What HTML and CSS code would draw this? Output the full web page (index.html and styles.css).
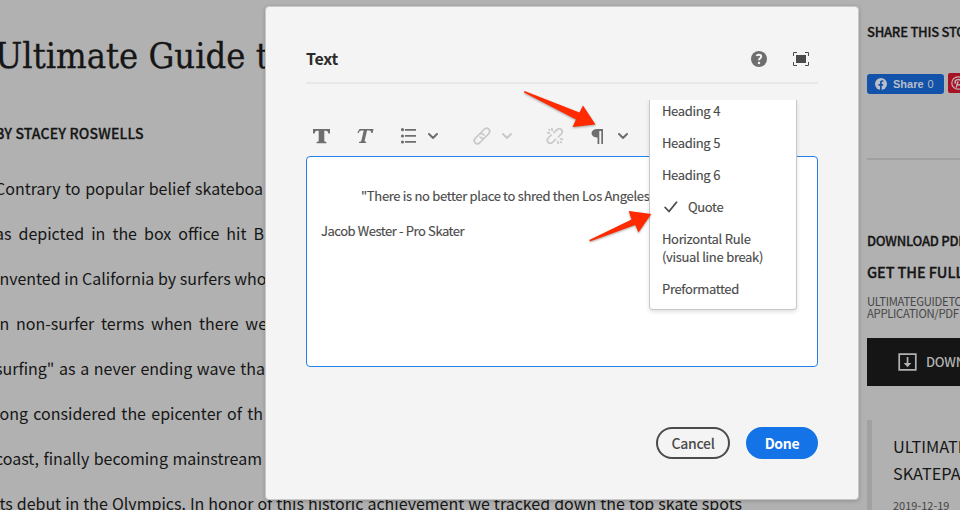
FILE: index.html
```html
<!DOCTYPE html>
<html lang="en">
<head>
<meta charset="utf-8">
<title>Ultimate Guide</title>
<link rel="stylesheet" href="styles.css">
</head>
<body>
<div class="page">
  <main class="article">
    <h1 class="headline">Ultimate Guide to</h1>
    <p class="byline">BY STACEY ROSWELLS</p>
    <div class="story">
      <p class="line l1">Contrary to popular belief skateboa</p>
      <p class="line l2">as depicted in the box office hit B</p>
      <p class="line l3">invented in California by surfers who</p>
      <p class="line l4">in non-surfer terms when there we</p>
      <p class="line l5">surfing" as a never ending wave tha</p>
      <p class="line l6">long considered the epicenter of th</p>
      <p class="line l7">coast, finally becoming mainstream</p>
      <p class="line l8">its debut in the Olympics. In honor of this historic achievement we tracked down the top skate spots</p>
    </div>
  </main>
  <aside class="sidebar">
    <h2 class="side-title">SHARE THIS STORY</h2>
    <div class="social">
      <span class="fb">
        <svg width="12" height="12" viewBox="0 0 12 12"><circle cx="6" cy="6" r="6" fill="#b9bec8"/><path d="M5 12V7.7H3.5V6H5V4.7C5 3.1 5.9 2.3 7.2 2.3l1.2.1v1.4h-.8c-.7 0-.9.5-.9 1V6h1.6L8 7.7H6.7V12z" fill="#1252a8"/></svg>
        <b>Share</b><span>0</span>
      </span>
      <span class="pin">
        <svg width="14" height="14" viewBox="0 0 14 14" fill="none" stroke="#c0b2b4"><circle cx="7" cy="7" r="6.2" stroke-width="1.2"/><path d="M5.2 11.6 7 5.4M4.6 7.7C3.2 5.5 4.8 3.5 7.2 3.5s3.6 2 2.8 3.9c-.7 1.9-3 2-3.5.7" stroke-width="1.5"/></svg>
      </span>
    </div>
    <hr class="rule">
    <h2 class="side-title pdf">DOWNLOAD PDF</h2>
    <h3 class="side-head">GET THE FULL</h3>
    <p class="meta">ULTIMATEGUIDETO<br>APPLICATION/PDF</p>
    <div class="download">
      <svg width="20" height="19" viewBox="0 0 20 19"><path d="M1.2 1.2h16.6v15.6H1.2z" fill="none" stroke="#b0b2b1" stroke-width="1.7"/><path d="M8.7 4h1.7v6h3L9.5 14.2 5.7 10h3z" fill="#b0b2b1"/></svg>
      <span>DOWNLOAD</span>
    </div>
    <div class="related">
      <p class="related-title">ULTIMATE<br>SKATEPARK</p>
      <p class="date">2019-12-19</p>
    </div>
  </aside>
</div>

<section class="dialog">
  <header class="dialog-head">
    <h2>Text</h2>
    <svg class="help" width="16" height="16" viewBox="0 0 16 16"><circle cx="8" cy="8" r="8" fill="#6e6e6e"/><path d="M5.6 5C6 3.4 10.2 3.1 10.2 5.6 10.2 7.3 8 7.3 8 9.3" fill="none" stroke="#f4f4f4" stroke-width="2"/><circle cx="8" cy="12" r="1.25" fill="#f4f4f4"/></svg>
    <svg class="full" width="16" height="14" viewBox="0 0 16 14"><path d="M3 3h10v8H3z" fill="#4b4b4b"/><path d="M.5 4V.5H4M12 .5h3.5V4M15.500 10v3.500H12M4 13.500H.5V10" fill="none" stroke="#4b4b4b"/></svg>
  </header>
  <div class="toolbar">
    <svg width="512" height="24" viewBox="306 124 512 24">
      <g fill="#6e6e6e">
        <path d="M313 129h17v4.500h-1.700c-.1-1.900-.8-2.700-2.500-2.700h-1.500v9.600c0 1 .4 1.300 2.100 1.500v1.300h-9.800v-1.300c1.700-.2 2.100-.5 2.100-1.500v-9.600h-1.500c-1.700 0-2.400.8-2.500 2.700H313z"/>
        <path d="M359.500 129h14l-.9 4h-1.300c0-1.900-.6-2.600-2.300-2.600h-2l-2.300 10c-.2.900.1 1.200 1.600 1.400l-.2 1.200h-7.100l.2-1.200c1.500-.2 1.900-.5 2.200-1.400l2.300-10h-1.900c-1.700 0-2.400.7-3.300 2.600h-1.300z"/>
        <circle cx="402.500" cy="129.700" r="1.600"/><circle cx="402.500" cy="136" r="1.600"/><circle cx="402.500" cy="142" r="1.600"/>
        <path d="M405 129h11v1.800h-11zM405 135h11v1.800h-11zM405 141h11v1.800h-11z"/>
        <path d="M603 129v15h-1.700v-13h-2v13h-1.800v-6.500c-8 0-8-8.500 0-8.500z"/>
      </g>
      <g fill="none" stroke-width="2" stroke-linecap="round" stroke-linejoin="round">
        <path d="m429 134 4 4 4-4M619 134l4 4 4-4" stroke="#6e6e6e"/>
        <path d="m503 134 4 4 4-4" stroke="#c9c9c9"/>
      </g>
      <g fill="none" stroke="#c9c9c9" stroke-width="1.700" stroke-linecap="round">
        <path d="m480 133.500 4-4c3.500-3.200 7.800 1 4.600 4.400l-3.600 3.600c-1.600 1.500-3.800 1.200-5-.6"/>
        <path d="m484 138.500-4 4c-3.500 3.200-7.800-1-4.600-4.400l3.600-3.600c1.600-1.500 3.800-1.200 5 .6"/>
        <path d="m554 132.700 3-3c3.200-2.700 7 1 4.300 4.300l-3 3M555.500 139.300l-3 3c-3.200 2.700-7-1-4.300-4.300l3-3M551.800 128.600l.5 1.800M547.600 132.600l1.800.5M549 129.500l.7.700M557.700 141.600l.5 1.800M560.600 138.900l1.800.5M560.600 141.800l.7.700"/>
      </g>
    </svg>
  </div>
  <div class="editor">
    <p class="quote">"There is no better place to shred then Los Angeles</p>
    <p class="author">Jacob Wester - Pro Skater</p>
  </div>
  <footer class="actions">
    <button class="btn cancel">Cancel</button>
    <button class="btn done">Done</button>
  </footer>
</section>

<ul class="menu">
  <li>Heading 4</li>
  <li>Heading 5</li>
  <li>Heading 6</li>
  <li class="checked"><svg width="14" height="12" viewBox="0 0 14 12"><path d="m1.200 6.500 3.800 4L12.500 1.300" fill="none" stroke="#4b4b4b" stroke-width="1.800" stroke-linecap="round" stroke-linejoin="round"/></svg>Quote</li>
  <li>Horizontal Rule<br>(visual line break)</li>
  <li>Preformatted</li>
</ul>

<svg class="arrows" width="960" height="510" viewBox="0 0 960 510" fill="#ff2a00">
  <path d="M524.500 91 579.500 112.500 583 105.500 595.500 124.500 572.500 127 576 119.500 524 92.500z"/>
  <path d="M589.300 240 631.500 219.500 628.700 211 651.300 214 638.500 232.500 635.200 225 590 241.500z"/>
</svg>
</body>
</html>
```
FILE: styles.css
```css
* { box-sizing: border-box; margin: 0; padding: 0; }
body {
  width: 960px; height: 510px; overflow: hidden; position: relative;
  background: #b1b1b1; color: #161616;
  font-family: "Noto Sans CJK JP", "Noto Sans", sans-serif;
}
.page { display: flex; width: 960px; height: 510px; overflow: hidden; }
.article { width: 867px; flex: none; margin-left: -5px; margin-right: 5px; }
.headline {
  height: 112px; padding-top: 34px; white-space: nowrap;
  font: 400 36px/44px "DejaVu Serif Condensed", "DejaVu Serif", serif;
  -webkit-text-stroke: .3px #161616;
}
.byline { line-height: 42px; font-size: 14px; font-weight: 500; letter-spacing: .15px; white-space: nowrap; -webkit-text-stroke: .3px #161616; }
.story { padding-top: 12px; }
.line { height: 45px; line-height: 45px; font-size: 16px; white-space: nowrap; text-align-last: justify; width: 268px; }
.l2 { width: 269px; }
.l3 { width: 271.5px; }
.l4 { width: 272px; }
.l5 { width: 270px; }
.l7 { width: 267px; }
.l8 { width: 747px; }
.sidebar { width: 240px; flex: none; white-space: nowrap; }
.side-title { font-size: 13px; font-weight: 500; line-height: 20px; padding-top: 22px; letter-spacing: -.25px; -webkit-text-stroke: .3px #161616; }
.social { display: flex; gap: 4px; margin-top: 31px; }
.fb {
  width: 77px; height: 20px; margin-top: 1px; padding-left: 8px; border-radius: 3px;
  display: flex; align-items: center; background: #1252a8; color: #b9bec8;
  font: 11px/20px "Liberation Sans", sans-serif;
}
.fb b { margin: 0 4px 0 6px; }
.pin { width: 40px; height: 20px; border-radius: 2px; padding: 3px; background: #a71224; line-height: 0; }
.rule { border: 0; height: 2px; background: #a0a0a0; margin-top: 64px; }
.pdf { padding-top: 71px; }
.side-head { font-size: 14.5px; font-weight: 500; line-height: 24px; margin-top: 9px; letter-spacing: -.1px; -webkit-text-stroke: .3px #161616; }
.meta { font-size: 11.3px; line-height: 12px; margin-top: 11px; letter-spacing: -.3px; color: #474747; }
.download {
  height: 48px; margin-top: 19px; padding-left: 31px; background: #151515; color: #b0b2b1;
  display: flex; align-items: center; gap: 8px; font-size: 13px; font-weight: 500; letter-spacing: -.25px;
}
.download span { margin-top: -2px; }
.related { margin-top: 34px; height: 100px; border-left: 5px solid #a1a1a1; padding: 13px 0 0 21px; }
.related-title { font-size: 16.3px; line-height: 27px; }
.date { font-size: 11px; line-height: 16px; margin-top: 10px; color: #474747; }

.dialog {
  position: absolute; left: 265px; top: 6px; width: 594px; height: 494px;
  padding: 0 40px; border: 1px solid #c8c8c8; border-radius: 4px;
  background: #f4f4f4; box-shadow: 0 1px 4px rgba(0, 0, 0, .2); color: #4b4b4b;
}
.dialog-head { height: 77px; padding-top: 29px; display: flex; align-items: center; border-bottom: 2px solid #e8e8e8; }
.dialog-head h2 { flex: 1; font-size: 16px; font-weight: 700; line-height: 24px; margin-top: -2px; letter-spacing: -.2px; color: #2c2c2c; }
.full { margin: 0 9px 0 26px; }
.toolbar { height: 72px; padding-top: 40px; line-height: 0; }
.editor {
  height: 211px; border: 1px solid #2680eb; border-radius: 4px; background: #fff;
  padding: 29px 15px 0; font-size: 13px; line-height: 20px; white-space: nowrap;
  -webkit-text-stroke: .15px #4b4b4b;
}
.quote { padding-left: 39px; letter-spacing: -.32px; }
.author { margin-top: 15px; margin-left: -1px; letter-spacing: -.48px; word-spacing: .3px; }
.actions { display: flex; justify-content: flex-end; gap: 16px; margin-top: 60px; }
.btn {
  height: 32px; border-radius: 16px; font: 500 14px/28px "Noto Sans CJK JP", sans-serif; letter-spacing: -.3px;
  border: 2px solid #4b4b4b; background: transparent; color: #4b4b4b;
}
.cancel { width: 74px; }
.done { width: 72px; border-color: #1473e6; background: #1473e6; color: #fff; font-weight: 700; }

.menu {
  position: absolute; left: 649px; top: 100px; width: 148px; height: 210px; list-style: none;
  border: 1px solid #c8c8c8; border-top: 0; border-radius: 0 0 4px 4px; background: #fff;
  box-shadow: 0 2px 4px rgba(0, 0, 0, .12); clip-path: inset(0 -8px -8px -8px);
  padding: 2px 12px 0; color: #4b4b4b; font-size: 13px; line-height: 18px; white-space: nowrap;
  letter-spacing: -.35px; word-spacing: .4px; -webkit-text-stroke: .15px #4b4b4b;
}
.menu li { margin-bottom: 14px; }
.checked svg { margin: 0 10px 0 2px; vertical-align: -1px; }
.arrows { position: absolute; left: 0; top: 0; filter: drop-shadow(0 1px 1px rgba(0, 0, 0, .35)); pointer-events: none; }
```
